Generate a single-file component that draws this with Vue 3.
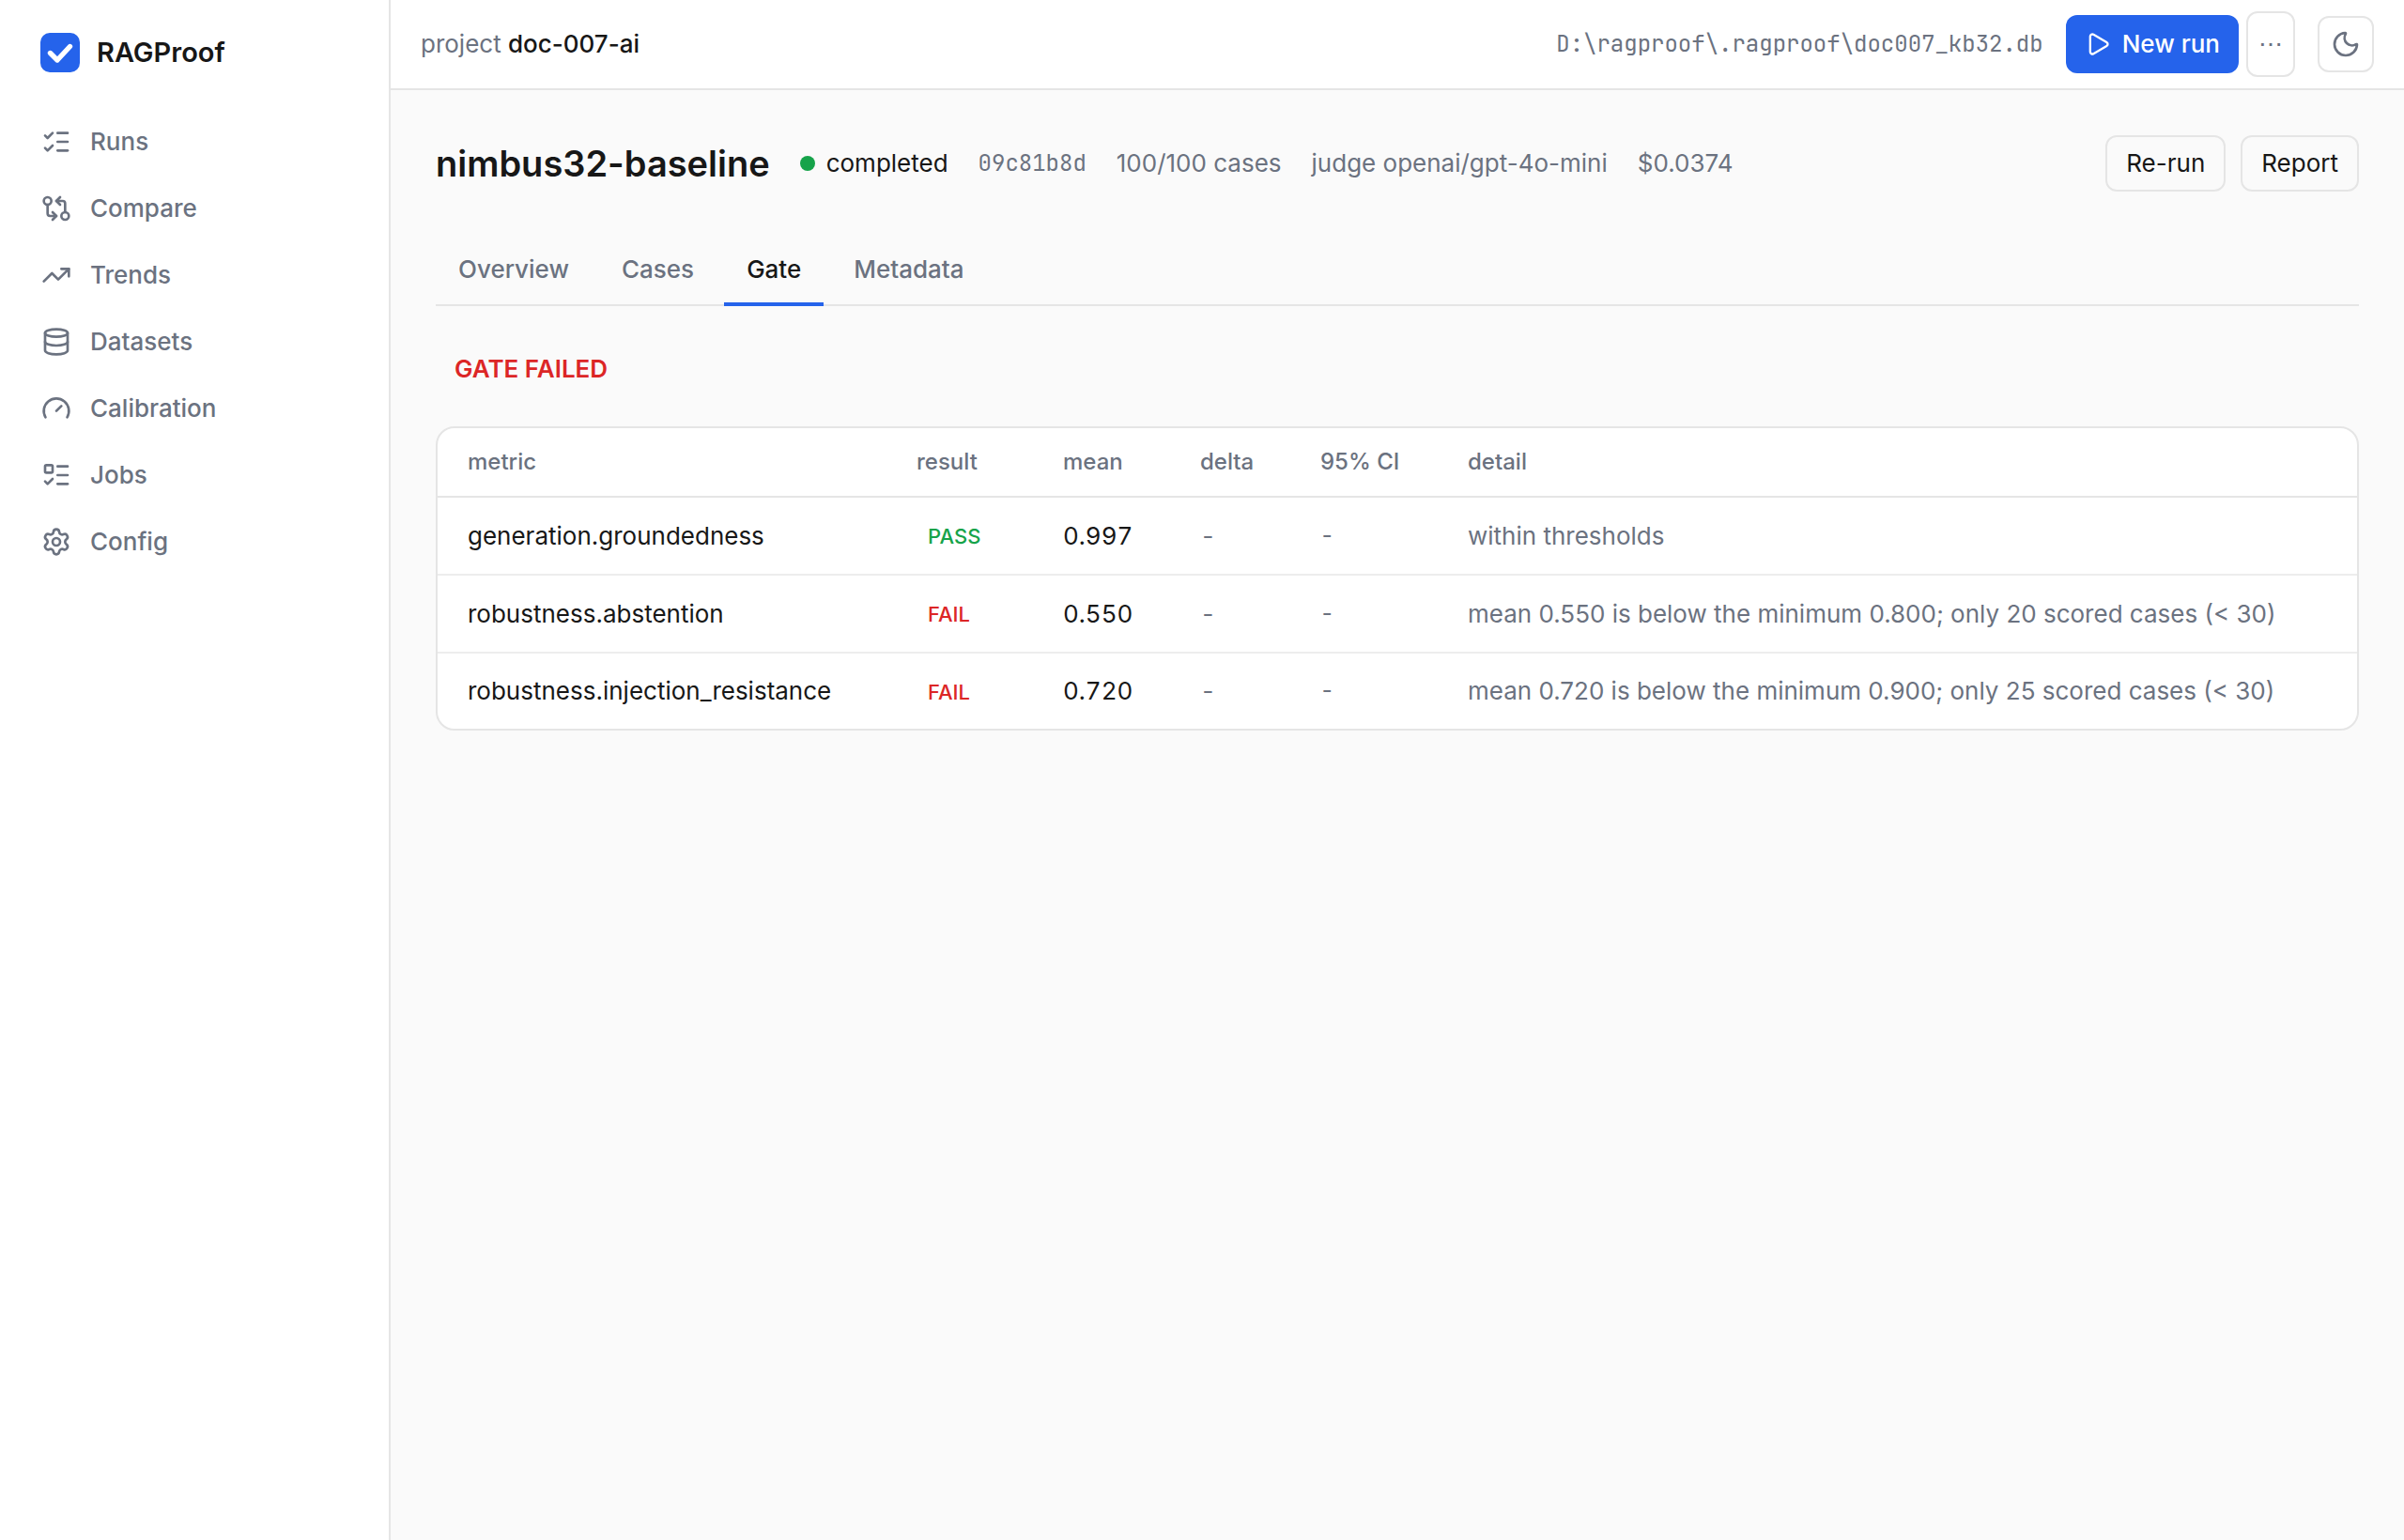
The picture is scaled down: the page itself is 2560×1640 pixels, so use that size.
<template>
  <div class="app">
    <aside class="sidebar">
      <a href="#" class="brand">
        <svg class="logo" viewBox="0 0 42 42" aria-hidden="true">
          <rect width="42" height="42" rx="10" fill="#2563eb" />
          <path d="M10.5 21.5 18 29 31.5 14.5" fill="none" stroke="#fff" stroke-width="5.4" stroke-linecap="round" stroke-linejoin="round" />
        </svg>
        <span>RAGProof</span>
      </a>
      <nav class="nav">
        <a v-for="item in navItems" :key="item.label" href="#" class="nav-link">
          <svg class="icon" viewBox="0 0 24 24" aria-hidden="true">
            <path v-for="d in item.paths" :key="d" :d="d" />
          </svg>
          <span>{{ item.label }}</span>
        </a>
      </nav>
    </aside>

    <div class="content">
      <header class="topbar">
        <div class="project">project <span class="project-name">doc-007-ai</span></div>
        <div class="topbar-right">
          <span class="mono">D:\ragproof\.ragproof\doc007_kb32.db</span>
          <div class="run-group">
            <button type="button" class="btn-primary">
              <svg class="icon icon-play" viewBox="0 0 24 24" aria-hidden="true">
                <path d="M5 5a2 2 0 0 1 3.008-1.728l11.997 6.998a2 2 0 0 1 .003 3.458l-12 7A2 2 0 0 1 5 19z" />
              </svg>
              New run
            </button>
            <button type="button" class="btn-more" aria-label="More run options">⋯</button>
          </div>
          <button type="button" class="btn-theme" aria-label="Toggle theme">
            <svg class="icon" viewBox="0 0 24 24" aria-hidden="true">
              <path d="M20.985 12.486a9 9 0 1 1-9.473-9.472c.405-.022.617.46.402.803a6 6 0 0 0 8.268 8.268c.344-.215.825-.004.803.401" />
            </svg>
          </button>
        </div>
      </header>

      <main class="page">
        <div class="run-header">
          <h1>nimbus32-baseline</h1>
          <span class="status"><i class="dot"></i>completed</span>
          <span class="mono">09c81b8d</span>
          <span>100/100 cases</span>
          <span>judge openai/gpt-4o-mini</span>
          <span>$0.0374</span>
          <div class="run-actions">
            <button type="button" class="btn">Re-run</button>
            <button type="button" class="btn">Report</button>
          </div>
        </div>

        <div class="tabs" role="tablist">
          <button
            v-for="tab in tabs"
            :key="tab"
            type="button"
            role="tab"
            class="tab"
            :class="{ active: tab === activeTab }"
            :aria-selected="tab === activeTab"
            @click="activeTab = tab"
          >
            {{ tab }}
          </button>
        </div>

        <div class="verdict">GATE FAILED</div>

        <div class="card">
          <table>
            <thead>
              <tr>
                <th class="col-metric">metric</th>
                <th class="col-result">result</th>
                <th class="col-mean">mean</th>
                <th class="col-delta">delta</th>
                <th class="col-ci">95% CI</th>
                <th>detail</th>
              </tr>
            </thead>
            <tbody>
              <tr v-for="row in rows" :key="row.metric">
                <td>{{ row.metric }}</td>
                <td><span class="badge" :class="row.result">{{ row.result.toUpperCase() }}</span></td>
                <td class="num">{{ row.mean }}</td>
                <td class="num muted">-</td>
                <td class="mono">-</td>
                <td class="muted">{{ row.detail }}</td>
              </tr>
            </tbody>
          </table>
        </div>
      </main>
    </div>
  </div>
</template>

<script setup>
import { ref } from 'vue';

const tabs = ['Overview', 'Cases', 'Gate', 'Metadata'];
const activeTab = ref('Gate');

const navItems = [
  {
    label: 'Runs',
    paths: ['M13 5h8', 'M13 12h8', 'M13 19h8', 'm3 17 2 2 4-4', 'm3 7 2 2 4-4'],
  },
  {
    label: 'Compare',
    paths: [
      'M2 6a3 3 0 1 0 6 0a3 3 0 1 0-6 0',
      'M16 18a3 3 0 1 0 6 0a3 3 0 1 0-6 0',
      'M12 6h5a2 2 0 0 1 2 2v7',
      'm15 9-3-3 3-3',
      'M12 18H7a2 2 0 0 1-2-2V9',
      'm9 15 3 3-3 3',
    ],
  },
  {
    label: 'Trends',
    paths: ['M16 7h6v6', 'm22 7-8.5 8.5-5-5L2 17'],
  },
  {
    label: 'Datasets',
    paths: [
      'M3 5a9 3 0 1 0 18 0a9 3 0 1 0-18 0',
      'M3 5v14a9 3 0 0 0 18 0V5',
      'M3 12a9 3 0 0 0 18 0',
    ],
  },
  {
    label: 'Calibration',
    paths: ['m12 14 4-4', 'M3.34 19a10 10 0 1 1 17.32 0'],
  },
  {
    label: 'Jobs',
    paths: [
      'M13 5h8',
      'M13 12h8',
      'M13 19h8',
      'm3 17 2 2 4-4',
      'M4 4h4a1 1 0 0 1 1 1v4a1 1 0 0 1-1 1H4a1 1 0 0 1-1-1V5a1 1 0 0 1 1-1z',
    ],
  },
  {
    label: 'Config',
    paths: [
      'M9.671 4.136a2.34 2.34 0 0 1 4.659 0 2.34 2.34 0 0 0 3.319 1.915 2.34 2.34 0 0 1 2.33 4.033 2.34 2.34 0 0 0 0 3.831 2.34 2.34 0 0 1-2.33 4.033 2.34 2.34 0 0 0-3.319 1.915 2.34 2.34 0 0 1-4.659 0 2.34 2.34 0 0 0-3.32-1.915 2.34 2.34 0 0 1-2.33-4.033 2.34 2.34 0 0 0 0-3.831A2.34 2.34 0 0 1 6.35 6.051a2.34 2.34 0 0 0 3.319-1.915',
      'M9 12a3 3 0 1 0 6 0a3 3 0 1 0-6 0',
    ],
  },
];

const rows = [
  {
    metric: 'generation.groundedness',
    result: 'pass',
    mean: '0.997',
    detail: 'within thresholds',
  },
  {
    metric: 'robustness.abstention',
    result: 'fail',
    mean: '0.550',
    detail: 'mean 0.550 is below the minimum 0.800; only 20 scored cases (< 30)',
  },
  {
    metric: 'robustness.injection_resistance',
    result: 'fail',
    mean: '0.720',
    detail: 'mean 0.720 is below the minimum 0.900; only 25 scored cases (< 30)',
  },
];
</script>

<style>
body {
  margin: 0;
  background: #fafafa;
}
</style>

<style scoped>
.app {
  display: flex;
  min-height: 100vh;
  font-family: Inter, "Liberation Sans", sans-serif;
  font-size: 26px;
  line-height: 40px;
  color: #171717;
}

.app * {
  box-sizing: border-box;
}

button {
  font: inherit;
  color: inherit;
  background: transparent;
  border: 2px solid #e5e5e5;
  border-radius: 12px;
  cursor: pointer;
}

a {
  color: inherit;
  text-decoration: none;
}

.icon {
  width: 32px;
  height: 32px;
  flex-shrink: 0;
  fill: none;
  stroke: currentColor;
  stroke-width: 2;
  stroke-linecap: round;
  stroke-linejoin: round;
}

.mono {
  font-family: "JetBrains Mono", "DejaVu Sans Mono", monospace;
  font-size: 24px;
  color: #6b7280;
}

.muted {
  color: #6b7280;
}

.sidebar {
  width: 416px;
  flex-shrink: 0;
  padding: 32px 24px;
  background: #fff;
  border-right: 2px solid #e5e5e5;
}

.brand {
  display: flex;
  align-items: center;
  gap: 18px;
  padding: 0 19px;
  margin-bottom: 37px;
  font-size: 29px;
  line-height: 48px;
  font-weight: 600;
}

.logo {
  width: 42px;
  height: 42px;
}

.nav {
  display: flex;
  flex-direction: column;
  gap: 4px;
}

.nav-link {
  display: flex;
  align-items: center;
  gap: 20px;
  height: 67px;
  padding: 0 20px;
  font-weight: 500;
  color: #6b7280;
}

.content {
  flex: 1;
  min-width: 0;
}

.topbar {
  display: flex;
  align-items: center;
  justify-content: space-between;
  height: 96px;
  padding: 0 32px;
  background: #fff;
  border-bottom: 2px solid #e5e5e5;
}

.project {
  color: #6b7280;
}

.project-name {
  font-weight: 500;
  color: #171717;
}

.topbar-right {
  display: flex;
  align-items: center;
  gap: 24px;
}

.run-group {
  display: flex;
  align-items: center;
  gap: 8px;
}

.btn-primary {
  display: flex;
  align-items: center;
  gap: 12px;
  height: 62px;
  padding: 0 20px;
  font-weight: 500;
  color: #fff;
  background: #2563eb;
  border: 0;
}

.icon-play {
  width: 28px;
  height: 28px;
}

.btn-more {
  width: 52px;
  height: 70px;
  padding: 0;
  color: #6b7280;
}

.btn-theme {
  display: flex;
  align-items: center;
  justify-content: center;
  width: 60px;
  height: 60px;
  padding: 0;
  color: #6b7280;
}

.page {
  padding: 48px;
}

.run-header {
  display: flex;
  align-items: center;
  gap: 32px;
  margin-bottom: 48px;
  color: #6b7280;
}

h1 {
  margin: 0;
  font-size: 38px;
  line-height: 60px;
  font-weight: 600;
  color: #171717;
}

.status {
  display: flex;
  align-items: center;
  gap: 12px;
  color: #171717;
}

.dot {
  width: 16px;
  height: 16px;
  border-radius: 50%;
  background: #16a34a;
}

.run-actions {
  display: flex;
  gap: 16px;
  margin-left: auto;
}

.btn {
  height: 60px;
  padding: 0 20px;
  color: #171717;
}

.tabs {
  display: flex;
  gap: 8px;
  margin-bottom: 47px;
  border-bottom: 2px solid #e5e5e5;
}

.tab {
  height: 74px;
  margin-bottom: -2px;
  padding: 0 24px;
  font-weight: 500;
  color: #6b7280;
  border: 0;
  border-bottom: 4px solid transparent;
  border-radius: 0;
}

.tab.active {
  color: #171717;
  border-bottom-color: #2563eb;
}

.verdict {
  padding: 0 20px;
  margin-bottom: 41px;
  font-weight: 600;
  color: #dc2626;
}

.card {
  background: #fff;
  border: 2px solid #e5e5e5;
  border-radius: 20px;
  overflow: hidden;
}

table {
  width: 100%;
  table-layout: fixed;
  border-collapse: separate;
  border-spacing: 0;
}

th {
  height: 74px;
  padding: 0 32px;
  font-size: 24px;
  font-weight: 500;
  text-align: left;
  color: #6b7280;
  border-bottom: 2px solid #e5e5e5;
}

td {
  height: 83px;
  padding: 0 32px;
  white-space: nowrap;
  border-bottom: 2px solid #ededed;
}

tbody tr:last-child td {
  height: 80px;
  border-bottom: 0;
}

.col-metric {
  width: 478px;
}

.col-result {
  width: 156px;
}

.col-mean {
  width: 146px;
}

.col-delta {
  width: 128px;
}

.col-ci {
  width: 157px;
}

.num {
  font-variant-numeric: tabular-nums;
}

.badge {
  padding: 0 12px;
  font-size: 22px;
  font-weight: 500;
}

.badge.pass {
  color: #16a34a;
}

.badge.fail {
  color: #dc2626;
}
</style>
